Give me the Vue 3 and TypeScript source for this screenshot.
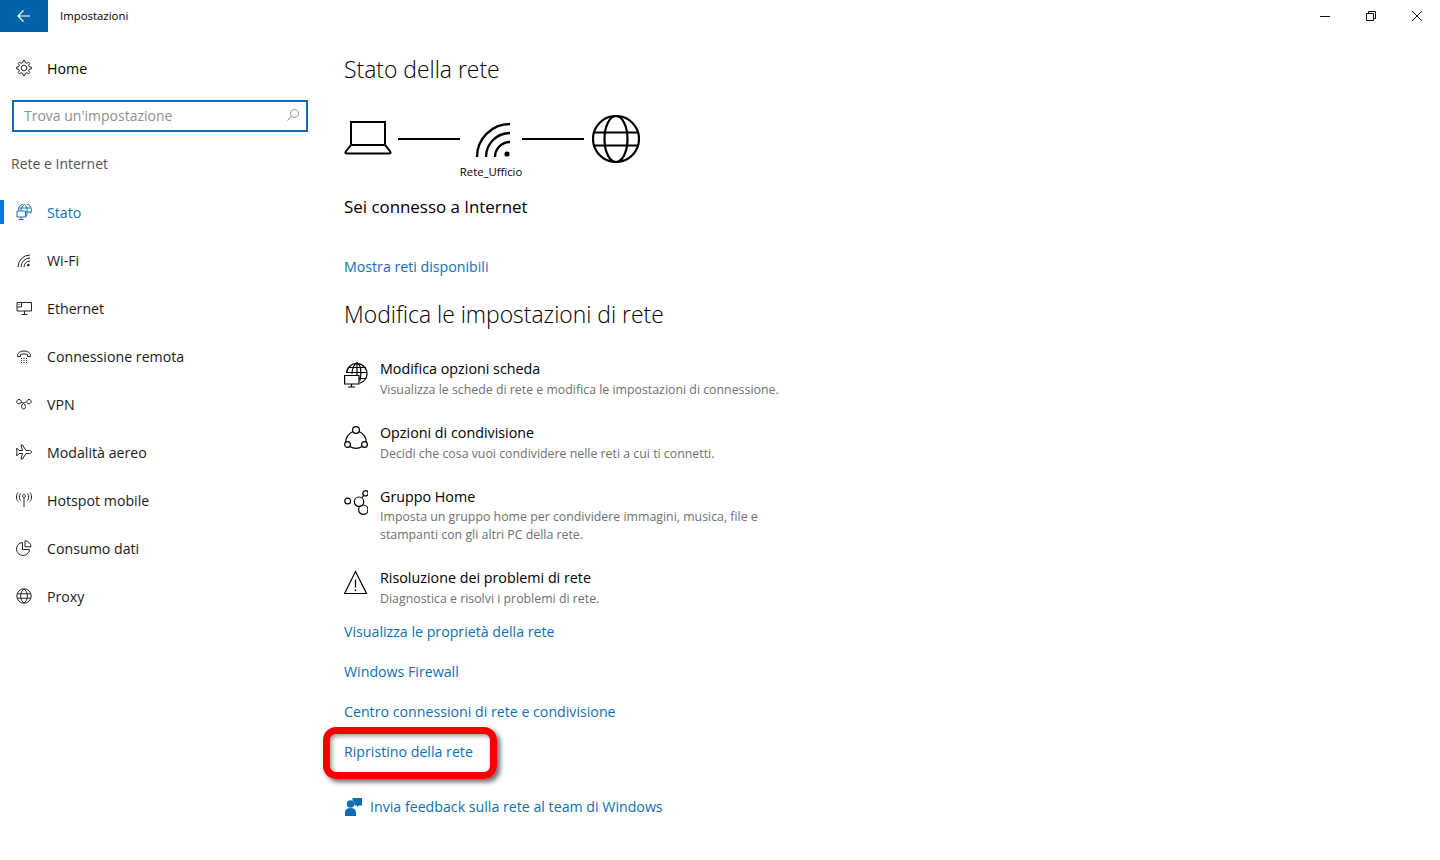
<script setup lang="ts">
interface Shape {
  d: string
  fill?: boolean
}

interface NavItem {
  label: string
  active?: boolean
  icon: Shape[]
}

const globe16: Shape[] = [
  { d: 'M8 .8a7.2 7.2 0 1 0 0 14.4A7.2 7.2 0 0 0 8 .8zM8 .8C3.5 4.5 3.5 11.5 8 15.2M8 .8c4.5 3.7 4.5 10.7 0 14.4M1.200 5.800h13.600M1.200 10.200h13.600' },
]

const navItems: NavItem[] = [
  {
    label: 'Stato',
    active: true,
    icon: [
      { d: 'M2.500 6.500A6.500 6.500 0 1 1 14.500 9.500M8.500 .5C6 2 5 4 5 6.500M8.500 .5C11 2.500 12 6 10.500 12.500M2.500 4h12M10 8h5' },
      { d: 'M1 7h8.500v6H1zM5 13v2.500M2.500 15.500h5' },
    ],
  },
  {
    label: 'Wi-Fi',
    icon: [
      { d: 'M2 15A12 12 0 0 1 14 3M5 15A9 9 0 0 1 14 6M8 15A6 6 0 0 1 14 9' },
      { d: 'M12.300 11.700a1.300 1.300 0 1 0 .01 0z', fill: true },
    ],
  },
  {
    label: 'Ethernet',
    icon: [{ d: 'M5.500 2.500h10v8.500H1V7M1 2.500h4.500V7H1zM2.500 4.500h1M8.500 11v3.500M5.500 14.500h6' }],
  },
  {
    label: 'Connessione remota',
    icon: [
      { d: 'M1.500 7.500C1.500 1.500 14.500 1.500 14.500 7.500v1h-3v-2c-2-.8-5-.8-7 0v2h-3z' },
      { d: 'M5 10h1v1H5zM7.500 10h1v1h-1zM10 10h1v1h-1zM5 12h1v1H5zM7.500 12h1v1h-1zM10 12h1v1h-1zM5 14h1v1H5zM7.500 14h1v1h-1zM10 14h1v1h-1z', fill: true },
    ],
  },
  {
    label: 'VPN',
    icon: [{ d: 'M3 3.500a2.200 2.200 0 1 0 .01 0zM13 3.500a2.200 2.200 0 1 0 .01 0zM5 6c2 .5 3.200 1.500 4 3 1 2 .5 4-1.300 4s-2.700-2-1.700-4c.8-1.500 2-2.500 4-3' }],
  },
  {
    label: 'Modalità aereo',
    icon: [{ d: 'M15.500 8c0-1-1-1.500-2-1.500H10L6.500 1H5l1.500 5.500H3L1.500 4.500H.5L1 8l-.5 3.500h1L3 9.500h3.500L5 15h1.500L10 9.500h3.500c1 0 2-.5 2-1.500z' }],
  },
  {
    label: 'Hotspot mobile',
    icon: [{ d: 'M8 5.500v9.500M8 2.500a1.500 1.500 0 1 0 .01 0zM4.500 1.500c-1.500 2-1.500 5 0 7M2 .5c-2 2.500-2 6.500 0 9M11.500 1.500c1.500 2 1.500 5 0 7M14 .5c2 2.500 2 6.500 0 9' }],
  },
  {
    label: 'Consumo dati',
    icon: [{ d: 'M6.500 2.500a6.500 6.500 0 1 0 7 7h-7zM9 .8a6 6 0 0 1 6 6H9z' }],
  },
  { label: 'Proxy', icon: globe16 },
]

const gearPath = (): string => {
  const pts: string[] = []
  const teeth = 8
  for (let i = 0; i < teeth; i++) {
    const a = (i / teeth) * Math.PI * 2
    const step = Math.PI / teeth
    const corners: [number, number][] = [
      [5.4, a - step * 0.62],
      [7.4, a - step * 0.32],
      [7.4, a + step * 0.32],
      [5.4, a + step * 0.62],
    ]
    for (const [r, t] of corners) {
      pts.push(`${(8 + r * Math.cos(t)).toFixed(2)} ${(8 + r * Math.sin(t)).toFixed(2)}`)
    }
  }
  return `M${pts.join('L')}Z`
}

const gear = gearPath()
</script>

<template>
  <div class="window">
    <header class="titlebar">
      <button class="back" type="button" aria-label="Indietro">
        <svg width="16" height="16" viewBox="0 0 16 16" fill="none" stroke="#fff" stroke-width="1.200">
          <path d="M14 8H2M7.500 2.500 2 8l5.500 5.500" />
        </svg>
      </button>
      <span class="app-title">Impostazioni</span>
      <div class="controls">
        <span class="control">
          <svg width="10" height="10" viewBox="0 0 10 10" fill="none" stroke="#111"><path d="M0 5.500h10" /></svg>
        </span>
        <span class="control">
          <svg width="10" height="10" viewBox="0 0 10 10" fill="none" stroke="#111"><path d="M.5 2.500h7v7h-7zM2.500 2.500v-2h7v7h-2" /></svg>
        </span>
        <span class="control">
          <svg width="10" height="10" viewBox="0 0 10 10" fill="none" stroke="#111"><path d="m0 0 10 10M10 0 0 10" /></svg>
        </span>
      </div>
    </header>

    <div class="body">
      <aside class="sidebar">
        <div class="nav-row home">
          <svg class="nav-icon" viewBox="0 0 16 16" fill="none" stroke="currentColor">
            <path :d="gear" />
            <circle cx="8" cy="8" r="2.800" />
          </svg>
          <span>Home</span>
        </div>

        <div class="search">
          <span>Trova un'impostazione</span>
          <svg width="14" height="14" viewBox="0 0 14 14" fill="none" stroke="#8f8f8f">
            <path d="M8.500 1.500a4 4 0 1 0 .01 0zM5.500 8 1.500 12.500" />
          </svg>
        </div>

        <div class="section-label">Rete e Internet</div>

        <nav>
          <div v-for="item in navItems" :key="item.label" class="nav-row" :class="{ active: item.active }">
            <svg class="nav-icon" viewBox="0 0 16 16" fill="none" stroke="currentColor">
              <path
                v-for="(shape, i) in item.icon"
                :key="i"
                :d="shape.d"
                :fill="shape.fill ? 'currentColor' : 'none'"
                :stroke="shape.fill ? 'none' : 'currentColor'"
              />
            </svg>
            <span>{{ item.label }}</span>
          </div>
        </nav>
      </aside>

      <main class="content">
        <h1>Stato della rete</h1>

        <div class="diagram">
          <svg class="laptop" width="48" height="48" viewBox="0 0 48 48" fill="none" stroke="#000" stroke-width="2">
            <path d="M7 30V7h34v23M7 30 1.800 36.500C1 37.800 1.500 38.500 3 38.500h42c1.500 0 2-.7 1.200-2L41 30z" />
          </svg>
          <div class="wire"></div>
          <div class="hub">
            <svg width="48" height="48" viewBox="0 0 48 48" fill="none" stroke="#000" stroke-width="2.300">
              <path d="M9 42A33 33 0 0 1 42 9M18 42A24 24 0 0 1 42 18M27 42A15 15 0 0 1 42 27" />
              <circle cx="39" cy="39" r="2.600" fill="#000" stroke="none" />
            </svg>
            <span class="hub-label">Rete_Ufficio</span>
          </div>
          <div class="wire"></div>
          <svg class="world" width="48" height="48" viewBox="0 0 48 48" fill="none" stroke="#000" stroke-width="2.200">
            <circle cx="24" cy="24" r="23" />
            <ellipse cx="24" cy="24" rx="11.500" ry="23" />
            <path d="M2 17.500h44M2 30.500h44" />
          </svg>
        </div>

        <p class="connected">Sei connesso a Internet</p>
        <a class="link available">Mostra reti disponibili</a>

        <h1 class="second">Modifica le impostazioni di rete</h1>

        <div class="option first">
          <svg class="option-icon" viewBox="0 0 24 27" fill="none" stroke="#000" stroke-width="1.200">
            <path d="M2.500 12A10 10 0 1 1 23 13.500 10 10 0 0 1 16 22M13 1.500C9.500 4 8 8 8 13M13 1.500c4 3 5 9 3 18M13 1.500V14M4 6.500h18M2.500 11.500H23M15 17.500h6.500" />
            <path d="M.6 14.500H15v8.500H.6zM7.500 23v3M4 26h7" fill="#fff" />
          </svg>
          <div>
            <div class="option-title">Modifica opzioni scheda</div>
            <div class="option-desc">Visualizza le schede di rete e modifica le impostazioni di connessione.</div>
          </div>
        </div>

        <div class="option">
          <svg class="option-icon" viewBox="0 0 24 27" fill="none" stroke="#000" stroke-width="1.200">
            <circle cx="12" cy="5" r="3.400" />
            <circle cx="3.500" cy="19.500" r="2.900" />
            <circle cx="20.500" cy="19.500" r="2.900" />
            <path d="M9 6.500C5 8.500 2 12 1.600 17M15 6.500c4 2 7 5.500 7.400 10.500M6 21.500c3.500 2.500 8.500 2.500 12 0" />
          </svg>
          <div>
            <div class="option-title">Opzioni di condivisione</div>
            <div class="option-desc">Decidi che cosa vuoi condividere nelle reti a cui ti connetti.</div>
          </div>
        </div>

        <div class="option">
          <svg class="option-icon" viewBox="0 0 24 27" fill="none" stroke="#000" stroke-width="1.200">
            <circle cx="3.700" cy="12" r="2.900" />
            <circle cx="21.500" cy="4.300" r="2.700" />
            <circle cx="15" cy="12.700" r="4.700" />
            <circle cx="19.300" cy="20.700" r="4.700" />
            <path d="M17.500 8.600 20 6.600" />
          </svg>
          <div>
            <div class="option-title">Gruppo Home</div>
            <div class="option-desc two-line">Imposta un gruppo home per condividere immagini, musica, file e<br />stampanti con gli altri PC della rete.</div>
          </div>
        </div>

        <div class="option">
          <svg class="option-icon" viewBox="0 0 24 27" fill="none" stroke="#000" stroke-width="1.200">
            <path d="M11.500 1.500 22.500 23.500H.6zM11.500 9.500v8" />
            <path d="M10.800 19.500h1.400v1.500h-1.400z" fill="#000" stroke="none" />
          </svg>
          <div>
            <div class="option-title">Risoluzione dei problemi di rete</div>
            <div class="option-desc">Diagnostica e risolvi i problemi di rete.</div>
          </div>
        </div>

        <div class="links">
          <a class="link">Visualizza le proprietà della rete</a>
          <a class="link">Windows Firewall</a>
          <a class="link">Centro connessioni di rete e condivisione</a>
          <a class="link highlighted">Ripristino della rete</a>
        </div>

        <div class="feedback">
          <svg width="18" height="18" viewBox="0 0 18 18" fill="#0f6cb3">
            <circle cx="6.500" cy="6" r="3.700" />
            <path d="M1 18v-3.500C1 11.500 3 10 6.500 10s5.500 1.500 5.500 4.500V18z" />
            <path d="M8.500 0H18v7.500h-3l-2 1.500V7.500H10.500C10.500 5 10 3 8.500 2.500z" />
          </svg>
          <a class="link">Invia feedback sulla rete al team di Windows</a>
        </div>
      </main>
    </div>
  </div>
</template>

<style scoped>
.window {
  width: 1440px;
  height: 860px;
  overflow: hidden;
  background: #fff;
  color: #000;
  font-family: "Open Sans", "Noto Sans", sans-serif;
  font-size: 14.200px;
}

.titlebar {
  display: flex;
  align-items: center;
  height: 32px;
}

.back {
  display: flex;
  align-items: center;
  justify-content: center;
  width: 48px;
  height: 32px;
  padding: 0;
  border: 0;
  background: #0063a8;
}

.app-title {
  margin: 0 0 2px 12px;
  font-size: 11.400px;
}

.controls {
  display: flex;
  margin-left: auto;
}

.control {
  display: flex;
  align-items: center;
  justify-content: center;
  width: 46px;
  height: 32px;
}

.body {
  display: flex;
}

.sidebar {
  width: 344px;
  flex-shrink: 0;
}

.nav-row {
  position: relative;
  display: flex;
  align-items: center;
  gap: 15px;
  width: 320px;
  height: 48px;
  padding-left: 16px;
  box-sizing: border-box;
  color: #1a1a1a;
}

.home {
  height: 36px;
  margin-top: 18px;
  color: #000;
}

.nav-icon {
  width: 16px;
  height: 16px;
  flex-shrink: 0;
  color: #222;
}

.nav-row.active {
  color: #0f72b5;
}

.nav-row.active .nav-icon {
  color: #0f72b5;
}

.nav-row.active::before {
  content: "";
  position: absolute;
  left: 0;
  top: 12px;
  width: 4px;
  height: 24px;
  background: #0078d7;
}

.search {
  display: flex;
  align-items: center;
  justify-content: space-between;
  width: 296px;
  height: 32px;
  margin: 14px 0 0 12px;
  padding: 0 6px 2px 10px;
  box-sizing: border-box;
  border: 2px solid #0f6cb3;
  color: #8f8f8f;
  font-size: 14px;
}

.section-label {
  height: 24px;
  margin: 20px 0 12px 11px;
  line-height: 24px;
  color: #555;
  font-size: 14px;
}

.content {
  display: flex;
  flex-direction: column;
  align-items: flex-start;
}

h1 {
  margin: 22px 0 0;
  font-size: 22.900px;
  font-weight: 300;
  line-height: 32px;
}

.diagram {
  display: flex;
  align-items: flex-start;
  margin-top: 29px;
}

.wire {
  width: 62px;
  height: 2px;
  margin-top: 23px;
  background: #000;
}

.laptop {
  margin-right: 6px;
}

.world {
  margin-left: 8px;
}

.hub {
  display: flex;
  flex-direction: column;
  align-items: center;
  width: 62px;
}

.hub svg {
  margin-left: 2px;
}

.hub-label {
  font-size: 11.300px;
  line-height: 17px;
  white-space: nowrap;
}

.connected {
  margin: 15px 0 0;
  font-size: 16.900px;
  line-height: 24px;
}

.link {
  color: #0f6fb3;
  line-height: 24px;
  cursor: pointer;
}

.available {
  margin-top: 36px;
}

.second {
  margin-top: 20px;
}

.option {
  display: flex;
  gap: 12px;
  margin-top: 24px;
}

.option.first {
  margin-top: 28px;
}

.option-icon {
  width: 24px;
  height: 27px;
  flex-shrink: 0;
  margin-top: 2px;
}

.option-title {
  line-height: 20px;
  font-size: 14.300px;
}

.option-desc {
  margin-top: 2px;
  font-size: 12.350px;
  line-height: 18px;
  color: #6f6f6f;
}

.option-desc.two-line {
  margin-top: 1px;
}

.links {
  display: flex;
  flex-direction: column;
  gap: 16px;
  margin-top: 12px;
}

.highlighted {
  position: relative;
}

.highlighted::after {
  content: "";
  position: absolute;
  left: -21px;
  top: -13px;
  width: 174px;
  height: 52px;
  box-sizing: border-box;
  border: 7px solid #f40000;
  border-radius: 13px;
  box-shadow: 3px 3px 5px rgba(0, 0, 0, 0.6), inset 2px 2px 4px rgba(0, 0, 0, 0.4);
}

.feedback {
  display: flex;
  align-items: center;
  gap: 8px;
  margin-top: 31px;
}
</style>

<style>
body {
  background: #fff;
}
</style>
